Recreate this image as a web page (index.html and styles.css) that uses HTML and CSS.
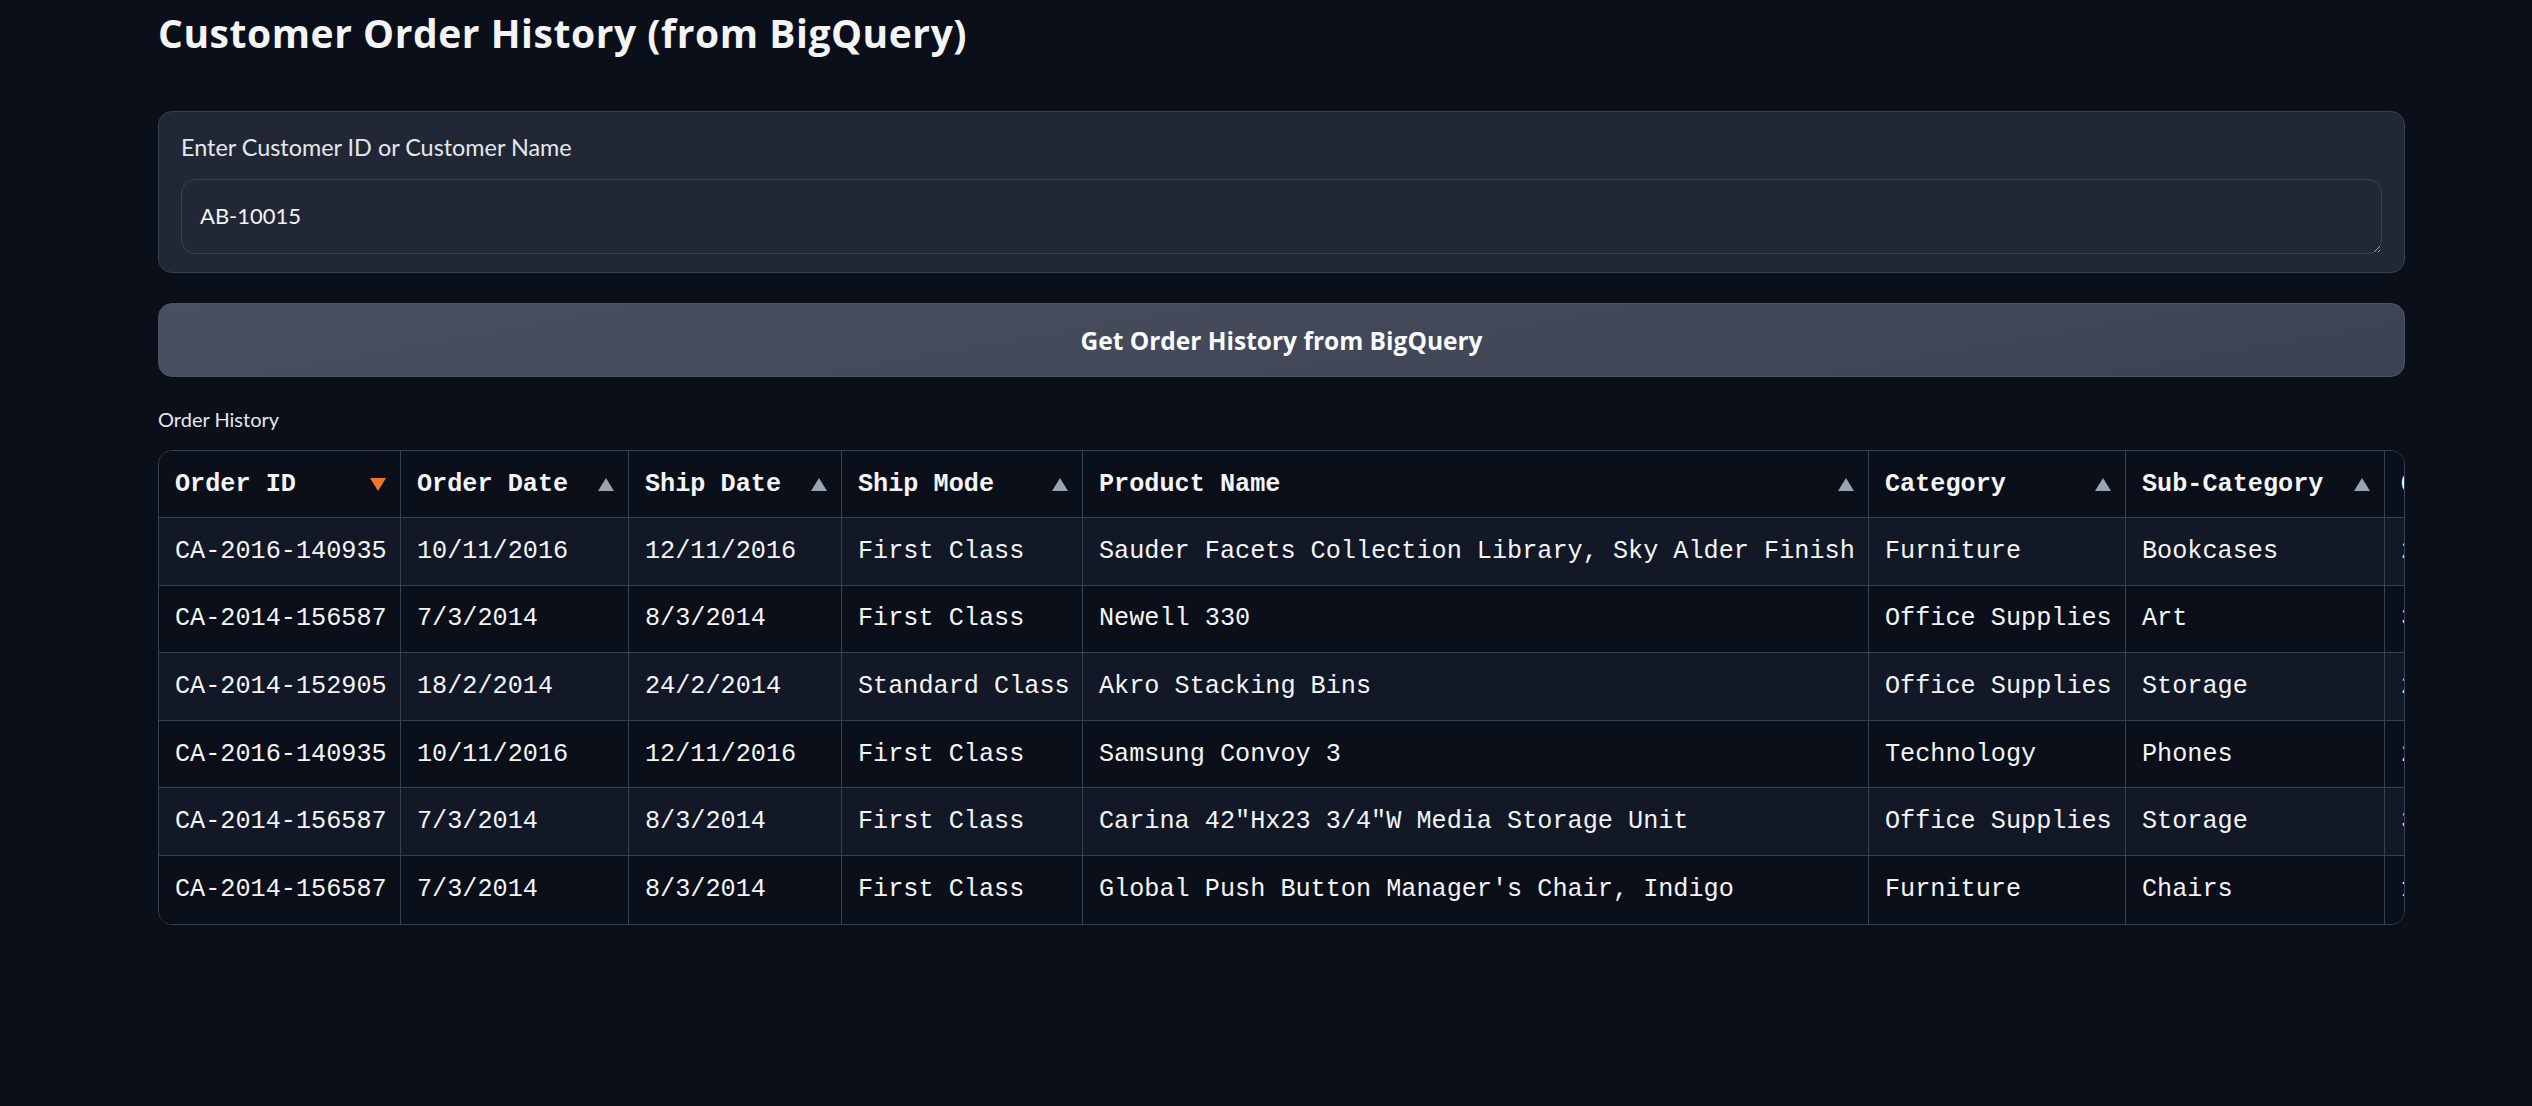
FILE: index.html
```html
<!DOCTYPE html>
<html lang="en">
<head>
<meta charset="utf-8">
<title>Customer Order History</title>
<link rel="stylesheet" href="styles.css">
</head>
<body>
<main class="app">
  <h1 class="title">Customer Order History (from BigQuery)</h1>

  <section class="block">
    <label class="block-label" for="cust">Enter Customer ID or Customer Name</label>
    <textarea id="cust" class="input" rows="1">AB-10015</textarea>
  </section>

  <button class="btn" type="button">Get Order History from BigQuery</button>

  <section class="results">
    <div class="results-label">Order History</div>
    <div class="table-wrap">
      <table class="grid">
        <colgroup>
          <col class="c1"><col class="c2"><col class="c3"><col class="c4"><col class="c5"><col class="c6"><col class="c7"><col class="c8">
        </colgroup>
        <thead>
          <tr>
            <th><div class="th"><span>Order ID</span><svg class="sort active" viewBox="0 0 16 13"><path d="M0 0H16L8 13Z"/></svg></div></th>
            <th><div class="th"><span>Order Date</span><svg class="sort" viewBox="0 0 16 13"><path d="M8 0L16 13H0Z"/></svg></div></th>
            <th><div class="th"><span>Ship Date</span><svg class="sort" viewBox="0 0 16 13"><path d="M8 0L16 13H0Z"/></svg></div></th>
            <th><div class="th"><span>Ship Mode</span><svg class="sort" viewBox="0 0 16 13"><path d="M8 0L16 13H0Z"/></svg></div></th>
            <th><div class="th"><span>Product Name</span><svg class="sort" viewBox="0 0 16 13"><path d="M8 0L16 13H0Z"/></svg></div></th>
            <th><div class="th"><span>Category</span><svg class="sort" viewBox="0 0 16 13"><path d="M8 0L16 13H0Z"/></svg></div></th>
            <th><div class="th"><span>Sub-Category</span><svg class="sort" viewBox="0 0 16 13"><path d="M8 0L16 13H0Z"/></svg></div></th>
            <th><div class="th"><span>Quantity</span></div></th>
          </tr>
        </thead>
        <tbody>
          <tr><td>CA-2016-140935</td><td>10/11/2016</td><td>12/11/2016</td><td>First Class</td><td>Sauder Facets Collection Library, Sky Alder Finish</td><td>Furniture</td><td>Bookcases</td><td>2</td></tr>
          <tr><td>CA-2014-156587</td><td>7/3/2014</td><td>8/3/2014</td><td>First Class</td><td>Newell 330</td><td>Office Supplies</td><td>Art</td><td>3</td></tr>
          <tr><td>CA-2014-152905</td><td>18/2/2014</td><td>24/2/2014</td><td>Standard Class</td><td>Akro Stacking Bins</td><td>Office Supplies</td><td>Storage</td><td>2</td></tr>
          <tr><td>CA-2016-140935</td><td>10/11/2016</td><td>12/11/2016</td><td>First Class</td><td>Samsung Convoy 3</td><td>Technology</td><td>Phones</td><td>2</td></tr>
          <tr><td>CA-2014-156587</td><td>7/3/2014</td><td>8/3/2014</td><td>First Class</td><td>Carina 42"Hx23 3/4"W Media Storage Unit</td><td>Office Supplies</td><td>Storage</td><td>3</td></tr>
          <tr><td>CA-2014-156587</td><td>7/3/2014</td><td>8/3/2014</td><td>First Class</td><td>Global Push Button Manager's Chair, Indigo</td><td>Furniture</td><td>Chairs</td><td>1</td></tr>
        </tbody>
      </table>
    </div>
  </section>
</main>
</body>
</html>
```

FILE: styles.css
```css
* { box-sizing: border-box; }

html, body {
  margin: 0;
  background: #0b0f19;
  color: #f3f4f6;
  font-family: Lato, "Noto Sans", sans-serif;
}

.app {
  width: 2247px;
  margin-left: 158px;
  display: flex;
  flex-direction: column;
}

.title {
  margin: 11px 0 0;
  font-family: "Open Sans", "Noto Sans", sans-serif;
  font-size: 39px;
  letter-spacing: 0.55px;
  line-height: 43px;
  font-weight: 700;
  color: #f3f4f6;
}

.block {
  margin-top: 57px;
  background: #212735;
  border: 1px solid #374151;
  border-radius: 14px;
  padding: 21px 22px 18px;
  display: flex;
  flex-direction: column;
  gap: 18px;
}

.block-label {
  font-size: 23.4px;
  line-height: 1.2;
  color: #e5e7eb;
}

.input {
  display: block;
  width: 100%;
  height: 75px;
  margin: 0;
  padding: 22.5px 18px 0;
  background: #212735;
  border: 1px solid #394150;
  border-radius: 14px;
  color: #f3f4f6;
  font-family: Lato, "Noto Sans", sans-serif;
  font-size: 22px;
  line-height: 1.2;
  resize: vertical;
  outline: none;
}

.btn {
  margin-top: 30px;
  height: 74px;
  width: 100%;
  border: 1px solid #4b5362;
  border-radius: 14px;
  background: linear-gradient(170deg, #4a5060 0%, #3c4252 100%);
  color: #f9fafb;
  font-family: "Open Sans", "Noto Sans", sans-serif;
  font-size: 24.5px;
  font-weight: 700;
}

.results {
  margin-top: 30px;
  display: flex;
  flex-direction: column;
  gap: 19px;
}

.results-label {
  font-size: 20px;
  line-height: 1.2;
  color: #e5e7eb;
}

.table-wrap {
  border: 1px solid #374151;
  border-radius: 14px;
  overflow: hidden;
}

.grid {
  border-collapse: separate;
  border-spacing: 0;
  table-layout: fixed;
  width: 2426px;
  font-family: "Liberation Mono", "DejaVu Sans Mono", monospace;
  font-size: 25.2px;
  color: #f3f4f6;
}

.c1 { width: 242px; }
.c2 { width: 228px; }
.c3 { width: 213px; }
.c4 { width: 241px; }
.c5 { width: 786px; }
.c6 { width: 257px; }
.c7 { width: 259px; }
.c8 { width: 200px; }

.grid th,
.grid td {
  height: 67.6px;
  padding: 0 14px 0 16px;
  border-right: 1px solid #374151;
  border-bottom: 1px solid #374151;
  white-space: nowrap;
  text-align: left;
  overflow: hidden;
}

.grid tbody tr:last-child td { border-bottom: none; }

.grid th {
  height: 67px;
  font-weight: 700;
  background: #0b0f19;
}

.th {
  display: flex;
  align-items: center;
  justify-content: space-between;
}

.sort {
  width: 16px;
  height: 13px;
  flex: none;
  fill: #9ca3af;
}

.sort.active { fill: #f0782d; }

.grid tbody tr:nth-child(odd) td { background: #121826; }
.grid tbody tr:nth-child(even) td { background: #0b0f19; }
```
